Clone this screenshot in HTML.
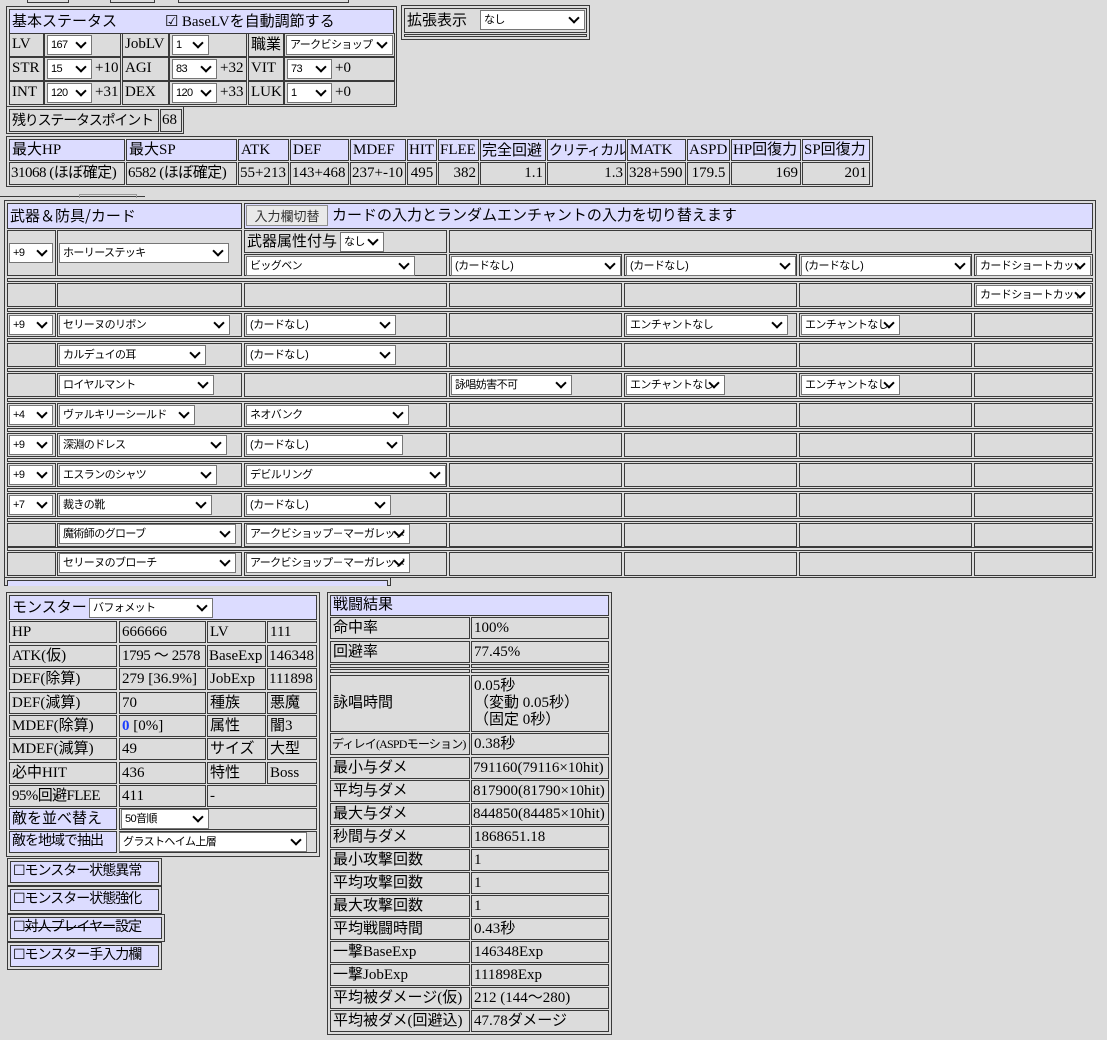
<!DOCTYPE html>
<html><head><meta charset="utf-8">
<style>
body{margin:0;width:1107px;height:1040px;background:#dcdcdc;font:15px "Liberation Serif","Noto Sans CJK JP",serif;color:#000;position:relative;overflow:hidden}
.b{position:absolute;border:1px solid #3a3a3a;box-sizing:border-box}
.c{position:absolute;border:1px solid #3a3a3a;box-sizing:border-box;padding-left:2px;white-space:nowrap;overflow:hidden;line-height:20px}
.h{background:#dcdcff}
.r{text-align:right;padding-right:2px}
.s{position:absolute;height:20px;box-sizing:border-box;background:#fff;border:1px solid #767676;font:11px "Liberation Sans","Noto Sans CJK JP",sans-serif;letter-spacing:-0.6px;line-height:18px;padding-left:3px;padding-right:18px;white-space:nowrap;overflow:hidden}
.s::after{content:"";position:absolute;right:6px;top:3px;width:6px;height:6px;border-right:2px solid #000;border-bottom:2px solid #000;transform:rotate(45deg);background:#fff}
.t{position:absolute;white-space:nowrap;line-height:20px}
.jp{font-family:"Noto Sans CJK JP","Liberation Sans",sans-serif}
.k{letter-spacing:-1px;font-size:14px}
.k2{letter-spacing:-1.2px;font-size:14px}
</style></head><body>

<div class="b" style="left:27px;top:-10px;width:42px;height:13px"></div>
<div class="b" style="left:110px;top:-10px;width:45px;height:13px"></div>
<div class="b" style="left:178px;top:-10px;width:171px;height:13px"></div>

<div class="b" style="left:6px;top:6px;width:391px;height:101px"></div>
<div class="c h jp" style="left:9px;top:9px;width:385px;height:25px;line-height:22px">基本ステータス<span style="position:absolute;left:155px">☑ <span style="font-family:'Liberation Serif','Noto Sans CJK JP',serif">BaseLV</span>を自動調節する</span></div>

<div class="c" style="left:9px;top:33px;width:35px;height:24px">LV</div>
<div class="c" style="left:44px;top:33px;width:77px;height:24px"></div><div class="s" style="left:47px;top:35px;width:45px">167</div>
<div class="c" style="left:122px;top:33px;width:47px;height:24px">JobLV</div>
<div class="c" style="left:169px;top:33px;width:78px;height:24px"></div><div class="s" style="left:172px;top:35px;width:37px">1</div>
<div class="c jp" style="left:248px;top:33px;width:36px;height:24px">職業</div>
<div class="c" style="left:284px;top:33px;width:111px;height:24px"></div><div class="s" style="left:286px;top:35px;width:107px">アークビショップ</div>

<div class="c" style="left:9px;top:57px;width:35px;height:24px">STR</div>
<div class="c" style="left:44px;top:57px;width:77px;height:24px"></div><div class="s" style="left:47px;top:59px;width:45px">15</div><div class="t" style="left:95px;top:58px">+10</div>
<div class="c" style="left:122px;top:57px;width:47px;height:24px">AGI</div>
<div class="c" style="left:169px;top:57px;width:78px;height:24px"></div><div class="s" style="left:172px;top:59px;width:45px">83</div><div class="t" style="left:220px;top:58px">+32</div>
<div class="c" style="left:248px;top:57px;width:36px;height:24px">VIT</div>
<div class="c" style="left:284px;top:57px;width:111px;height:24px"></div><div class="s" style="left:287px;top:59px;width:45px">73</div><div class="t" style="left:335px;top:58px">+0</div>

<div class="c" style="left:9px;top:81px;width:35px;height:24px">INT</div>
<div class="c" style="left:44px;top:81px;width:77px;height:24px"></div><div class="s" style="left:47px;top:83px;width:45px">120</div><div class="t" style="left:95px;top:82px">+31</div>
<div class="c" style="left:122px;top:81px;width:47px;height:24px">DEX</div>
<div class="c" style="left:169px;top:81px;width:78px;height:24px"></div><div class="s" style="left:172px;top:83px;width:45px">120</div><div class="t" style="left:220px;top:82px">+33</div>
<div class="c" style="left:248px;top:81px;width:36px;height:24px">LUK</div>
<div class="c" style="left:284px;top:81px;width:111px;height:24px"></div><div class="s" style="left:287px;top:83px;width:45px">1</div><div class="t" style="left:335px;top:82px">+0</div>

<div class="b" style="left:6px;top:106px;width:178px;height:28px"></div>
<div class="c jp k2" style="left:9px;top:109px;width:150px;height:23px">残りステータスポイント</div>
<div class="c" style="left:160px;top:109px;width:22px;height:23px;padding-left:1px">68</div>

<div class="b" style="left:401px;top:5px;width:189px;height:35px"></div>
<div class="c jp" style="left:404px;top:8px;width:183px;height:25px;line-height:22px">拡張表示</div>
<div class="s" style="left:480px;top:10px;width:105px">なし</div>
<div class="b" style="left:404px;top:34px;width:183px;height:3px"></div>

<div class="b" style="left:6px;top:136px;width:867px;height:51px"></div>
<div class="c h" style="left:9px;top:139px;width:116px;height:22px">最大HP</div>
<div class="c h" style="left:126px;top:139px;width:111px;height:22px">最大SP</div>
<div class="c h" style="left:238px;top:139px;width:51px;height:22px">ATK</div>
<div class="c h" style="left:290px;top:139px;width:59px;height:22px">DEF</div>
<div class="c h" style="left:350px;top:139px;width:56px;height:22px">MDEF</div>
<div class="c h" style="left:407px;top:139px;width:30px;height:22px;padding-left:1px">HIT</div>
<div class="c h" style="left:438px;top:139px;width:41px;height:22px;padding-left:1px">FLEE</div>
<div class="c h jp" style="left:480px;top:139px;width:66px;height:22px;padding-left:1px">完全回避</div>
<div class="c h jp k" style="left:547px;top:139px;width:79px;height:22px;padding-left:1px">クリティカル</div>
<div class="c h" style="left:627px;top:139px;width:59px;height:22px">MATK</div>
<div class="c h" style="left:687px;top:139px;width:43px;height:22px;padding-left:1px">ASPD</div>
<div class="c h" style="left:731px;top:139px;width:70px;height:22px;padding-left:1px">HP回復力</div>
<div class="c h" style="left:802px;top:139px;width:68px;height:22px;padding-left:1px">SP回復力</div>

<div class="c" style="left:9px;top:162px;width:116px;height:23px;padding-left:1px;letter-spacing:-0.5px">31068 (ほぼ確定)</div>
<div class="c" style="left:126px;top:162px;width:111px;height:23px;padding-left:1px;letter-spacing:-0.5px">6582 (ほぼ確定)</div>
<div class="c" style="left:238px;top:162px;width:51px;height:23px;padding-left:1px">55+213</div>
<div class="c" style="left:290px;top:162px;width:59px;height:23px;padding-left:1px">143+468</div>
<div class="c" style="left:350px;top:162px;width:56px;height:23px;padding-left:1px">237+-10</div>
<div class="c" style="left:407px;top:162px;width:30px;height:23px;text-align:center;padding:0">495</div>
<div class="c r" style="left:438px;top:162px;width:41px;height:23px">382</div>
<div class="c r" style="left:480px;top:162px;width:66px;height:23px">1.1</div>
<div class="c r" style="left:547px;top:162px;width:79px;height:23px">1.3</div>
<div class="c" style="left:627px;top:162px;width:59px;height:23px;padding-left:1px">328+590</div>
<div class="c" style="left:687px;top:162px;width:43px;height:23px;text-align:center;padding:0">179.5</div>
<div class="c r" style="left:731px;top:162px;width:70px;height:23px">169</div>
<div class="c r" style="left:802px;top:162px;width:68px;height:23px">201</div>

<div class="b" style="left:0px;top:196px;width:145px;height:2px;border-width:1px 0 0 0"></div>
<div class="b" style="left:79px;top:194px;width:58px;height:4px;border-width:1px 1px 0 1px;border-color:#999"></div>

<div class="b" style="left:4px;top:200px;width:1092px;height:378px"></div>
<div class="c h jp" style="left:7px;top:203px;width:235px;height:26px;line-height:23px">武器＆防具/カード</div>
<div class="c h jp" style="left:244px;top:203px;width:849px;height:26px;line-height:23px"></div>
<div style="position:absolute;left:246px;top:205px;width:82px;height:21px;box-sizing:border-box;border:1px solid #8f8f8f;background:#e9e9e9;font:13px 'Noto Sans CJK JP',sans-serif;line-height:19px;text-align:center;color:#333">入力欄切替</div>
<div class="t jp" style="left:332px;top:205px">カードの入力とランダムエンチャントの入力を切り替えます</div>

<div class="c" style="left:7px;top:230px;width:49px;height:46px"></div><div class="s" style="left:9px;top:243px;width:44px">+9</div>
<div class="c" style="left:57px;top:230px;width:185px;height:46px"></div><div class="s" style="left:59px;top:243px;width:170px">ホーリーステッキ</div>
<div class="c jp" style="left:244px;top:230px;width:203px;height:23px">武器属性付与</div><div class="s" style="left:340px;top:232px;width:44px">なし</div>
<div class="c" style="left:449px;top:230px;width:643px;height:23px"></div>
<div class="c" style="left:244px;top:254px;width:203px;height:22px"></div><div class="s" style="left:246px;top:256px;width:169px">ビッグベン</div>
<div class="c" style="left:449px;top:254px;width:173px;height:22px"></div><div class="s" style="left:451px;top:256px;width:170px">(カードなし)</div>
<div class="c" style="left:624px;top:254px;width:173px;height:22px"></div><div class="s" style="left:626px;top:256px;width:170px">(カードなし)</div>
<div class="c" style="left:799px;top:254px;width:173px;height:22px"></div><div class="s" style="left:801px;top:256px;width:170px">(カードなし)</div>
<div class="c" style="left:974px;top:254px;width:119px;height:22px"></div><div class="s" style="left:976px;top:256px;width:115px">カードショートカット</div>

<div class="b" style="left:7px;top:278px;width:1086px;height:4px"></div>
<div class="b" style="left:7px;top:308px;width:1086px;height:4px"></div>
<div class="b" style="left:7px;top:338px;width:1086px;height:4px"></div>
<div class="b" style="left:7px;top:368px;width:1086px;height:4px"></div>
<div class="b" style="left:7px;top:398px;width:1086px;height:4px"></div>
<div class="b" style="left:7px;top:428px;width:1086px;height:4px"></div>
<div class="b" style="left:7px;top:458px;width:1086px;height:4px"></div>
<div class="b" style="left:7px;top:488px;width:1086px;height:4px"></div>
<div class="b" style="left:7px;top:518px;width:1086px;height:4px"></div>
<div class="b" style="left:7px;top:547px;width:1086px;height:4px"></div>

<div class="c" style="left:7px;top:283px;width:49px;height:24px"></div><div class="c" style="left:57px;top:283px;width:185px;height:24px"></div><div class="c" style="left:244px;top:283px;width:203px;height:24px"></div><div class="c" style="left:449px;top:283px;width:173px;height:24px"></div><div class="c" style="left:624px;top:283px;width:173px;height:24px"></div><div class="c" style="left:799px;top:283px;width:173px;height:24px"></div><div class="c" style="left:974px;top:283px;width:119px;height:24px"></div>
<div class="s" style="left:976px;top:285px;width:115px">カードショートカット</div>

<div class="c" style="left:7px;top:313px;width:49px;height:24px"></div><div class="c" style="left:57px;top:313px;width:185px;height:24px"></div><div class="c" style="left:244px;top:313px;width:203px;height:24px"></div><div class="c" style="left:449px;top:313px;width:173px;height:24px"></div><div class="c" style="left:624px;top:313px;width:173px;height:24px"></div><div class="c" style="left:799px;top:313px;width:173px;height:24px"></div><div class="c" style="left:974px;top:313px;width:119px;height:24px"></div>
<div class="s" style="left:9px;top:315px;width:44px">+9</div><div class="s" style="left:59px;top:315px;width:171px">セリーヌのリボン</div><div class="s" style="left:246px;top:315px;width:150px">(カードなし)</div><div class="s" style="left:626px;top:315px;width:162px">エンチャントなし</div><div class="s" style="left:801px;top:315px;width:99px">エンチャントなし</div>

<div class="c" style="left:7px;top:343px;width:49px;height:24px"></div><div class="c" style="left:57px;top:343px;width:185px;height:24px"></div><div class="c" style="left:244px;top:343px;width:203px;height:24px"></div><div class="c" style="left:449px;top:343px;width:173px;height:24px"></div><div class="c" style="left:624px;top:343px;width:173px;height:24px"></div><div class="c" style="left:799px;top:343px;width:173px;height:24px"></div><div class="c" style="left:974px;top:343px;width:119px;height:24px"></div>
<div class="s" style="left:59px;top:345px;width:147px">カルデュイの耳</div><div class="s" style="left:246px;top:345px;width:150px">(カードなし)</div>

<div class="c" style="left:7px;top:373px;width:49px;height:24px"></div><div class="c" style="left:57px;top:373px;width:185px;height:24px"></div><div class="c" style="left:244px;top:373px;width:203px;height:24px"></div><div class="c" style="left:449px;top:373px;width:173px;height:24px"></div><div class="c" style="left:624px;top:373px;width:173px;height:24px"></div><div class="c" style="left:799px;top:373px;width:173px;height:24px"></div><div class="c" style="left:974px;top:373px;width:119px;height:24px"></div>
<div class="s" style="left:59px;top:375px;width:155px">ロイヤルマント</div><div class="s" style="left:451px;top:375px;width:121px">詠唱妨害不可</div><div class="s" style="left:626px;top:375px;width:99px">エンチャントなし</div><div class="s" style="left:801px;top:375px;width:99px">エンチャントなし</div>

<div class="c" style="left:7px;top:403px;width:49px;height:24px"></div><div class="c" style="left:57px;top:403px;width:185px;height:24px"></div><div class="c" style="left:244px;top:403px;width:203px;height:24px"></div><div class="c" style="left:449px;top:403px;width:173px;height:24px"></div><div class="c" style="left:624px;top:403px;width:173px;height:24px"></div><div class="c" style="left:799px;top:403px;width:173px;height:24px"></div><div class="c" style="left:974px;top:403px;width:119px;height:24px"></div>
<div class="s" style="left:9px;top:405px;width:44px">+4</div><div class="s" style="left:59px;top:405px;width:136px">ヴァルキリーシールド</div><div class="s" style="left:246px;top:405px;width:163px">ネオバンク</div>

<div class="c" style="left:7px;top:433px;width:49px;height:24px"></div><div class="c" style="left:57px;top:433px;width:185px;height:24px"></div><div class="c" style="left:244px;top:433px;width:203px;height:24px"></div><div class="c" style="left:449px;top:433px;width:173px;height:24px"></div><div class="c" style="left:624px;top:433px;width:173px;height:24px"></div><div class="c" style="left:799px;top:433px;width:173px;height:24px"></div><div class="c" style="left:974px;top:433px;width:119px;height:24px"></div>
<div class="s" style="left:9px;top:435px;width:44px">+9</div><div class="s" style="left:59px;top:435px;width:168px">深淵のドレス</div><div class="s" style="left:246px;top:435px;width:157px">(カードなし)</div>

<div class="c" style="left:7px;top:463px;width:49px;height:24px"></div><div class="c" style="left:57px;top:463px;width:185px;height:24px"></div><div class="c" style="left:244px;top:463px;width:203px;height:24px"></div><div class="c" style="left:449px;top:463px;width:173px;height:24px"></div><div class="c" style="left:624px;top:463px;width:173px;height:24px"></div><div class="c" style="left:799px;top:463px;width:173px;height:24px"></div><div class="c" style="left:974px;top:463px;width:119px;height:24px"></div>
<div class="s" style="left:9px;top:465px;width:44px">+9</div><div class="s" style="left:59px;top:465px;width:158px">エスランのシャツ</div><div class="s" style="left:246px;top:465px;width:200px">デビルリング</div>

<div class="c" style="left:7px;top:493px;width:49px;height:24px"></div><div class="c" style="left:57px;top:493px;width:185px;height:24px"></div><div class="c" style="left:244px;top:493px;width:203px;height:24px"></div><div class="c" style="left:449px;top:493px;width:173px;height:24px"></div><div class="c" style="left:624px;top:493px;width:173px;height:24px"></div><div class="c" style="left:799px;top:493px;width:173px;height:24px"></div><div class="c" style="left:974px;top:493px;width:119px;height:24px"></div>
<div class="s" style="left:9px;top:495px;width:44px">+7</div><div class="s" style="left:59px;top:495px;width:153px">裁きの靴</div><div class="s" style="left:246px;top:495px;width:145px">(カードなし)</div>

<div class="c" style="left:7px;top:523px;width:49px;height:24px"></div><div class="c" style="left:57px;top:523px;width:185px;height:24px"></div><div class="c" style="left:244px;top:523px;width:203px;height:24px"></div><div class="c" style="left:449px;top:523px;width:173px;height:24px"></div><div class="c" style="left:624px;top:523px;width:173px;height:24px"></div><div class="c" style="left:799px;top:523px;width:173px;height:24px"></div><div class="c" style="left:974px;top:523px;width:119px;height:24px"></div>
<div class="s" style="left:59px;top:524px;width:177px">魔術師のグローブ</div><div class="s" style="left:246px;top:524px;width:164px">アークビショップ－マーガレッタ</div>

<div class="c" style="left:7px;top:552px;width:49px;height:24px"></div><div class="c" style="left:57px;top:552px;width:185px;height:24px"></div><div class="c" style="left:244px;top:552px;width:203px;height:24px"></div><div class="c" style="left:449px;top:552px;width:173px;height:24px"></div><div class="c" style="left:624px;top:552px;width:173px;height:24px"></div><div class="c" style="left:799px;top:552px;width:173px;height:24px"></div><div class="c" style="left:974px;top:552px;width:119px;height:24px"></div>
<div class="s" style="left:59px;top:553px;width:177px">セリーヌのブローチ</div><div class="s" style="left:246px;top:553px;width:164px">アークビショップ－マーガレッタ</div>

<div class="b" style="left:4px;top:577px;width:387px;height:9px"></div>
<div class="b h" style="left:7px;top:580px;width:381px;height:6px;border-bottom:0"></div>

<div class="b" style="left:6px;top:592px;width:314px;height:265px"></div>
<div class="c h jp" style="left:9px;top:595px;width:308px;height:25px;line-height:22px">モンスター：</div>
<div class="s" style="left:89px;top:598px;width:124px">バフォメット</div>

<div class="c" style="left:9px;top:621px;width:108px;height:22px">HP</div><div class="c" style="left:119px;top:621px;width:87px;height:22px">666666</div><div class="c" style="left:207px;top:621px;width:59px;height:22px">LV</div><div class="c" style="left:267px;top:621px;width:50px;height:22px">111</div>
<div class="c" style="left:9px;top:645px;width:108px;height:22px">ATK(仮)</div><div class="c" style="left:119px;top:645px;width:87px;height:22px;letter-spacing:-0.4px">1795 ～ 2578</div><div class="c" style="left:207px;top:645px;width:59px;height:22px;padding-left:1px">BaseExp</div><div class="c" style="left:267px;top:645px;width:50px;height:22px;padding-left:1px">146348</div>
<div class="c" style="left:9px;top:668px;width:108px;height:22px">DEF(除算)</div><div class="c" style="left:119px;top:668px;width:87px;height:22px">279 [36.9%]</div><div class="c" style="left:207px;top:668px;width:59px;height:22px">JobExp</div><div class="c" style="left:267px;top:668px;width:50px;height:22px;padding-left:1px">111898</div>
<div class="c" style="left:9px;top:692px;width:108px;height:22px">DEF(減算)</div><div class="c" style="left:119px;top:692px;width:87px;height:22px">70</div><div class="c" style="left:207px;top:692px;width:59px;height:22px">種族</div><div class="c" style="left:267px;top:692px;width:50px;height:22px">悪魔</div>
<div class="c" style="left:9px;top:715px;width:108px;height:22px">MDEF(除算)</div><div class="c" style="left:119px;top:715px;width:87px;height:22px"><b style="color:#1a3cff">0</b> [0%]</div><div class="c" style="left:207px;top:715px;width:59px;height:22px">属性</div><div class="c" style="left:267px;top:715px;width:50px;height:22px">闇3</div>
<div class="c" style="left:9px;top:738px;width:108px;height:22px">MDEF(減算)</div><div class="c" style="left:119px;top:738px;width:87px;height:22px">49</div><div class="c" style="left:207px;top:738px;width:59px;height:22px">サイズ</div><div class="c" style="left:267px;top:738px;width:50px;height:22px">大型</div>
<div class="c" style="left:9px;top:762px;width:108px;height:22px">必中HIT</div><div class="c" style="left:119px;top:762px;width:87px;height:22px">436</div><div class="c" style="left:207px;top:762px;width:59px;height:22px">特性</div><div class="c" style="left:267px;top:762px;width:50px;height:22px">Boss</div>
<div class="c" style="left:9px;top:785px;width:108px;height:22px;letter-spacing:-0.6px">95%回避FLEE</div><div class="c" style="left:119px;top:785px;width:87px;height:22px">411</div><div class="c" style="left:207px;top:785px;width:110px;height:22px">-</div>
<div class="c h" style="left:9px;top:808px;width:108px;height:22px">敵を並べ替え</div><div class="c" style="left:119px;top:808px;width:198px;height:22px"></div><div class="s" style="left:121px;top:809px;width:88px">50音順</div>
<div class="c h k" style="left:9px;top:831px;width:108px;height:22px">敵を地域で抽出</div><div class="c" style="left:119px;top:831px;width:198px;height:22px"></div><div class="s" style="left:119px;top:832px;width:188px">グラストヘイム上層</div>

<div class="b" style="left:7px;top:858px;width:155px;height:28px"></div><div class="c h k" style="left:10px;top:861px;width:149px;height:22px">☐モンスター状態異常</div>
<div class="b" style="left:7px;top:886px;width:155px;height:28px"></div><div class="c h k" style="left:10px;top:889px;width:149px;height:22px">☐モンスター状態強化</div>
<div class="b" style="left:7px;top:914px;width:158px;height:28px"></div><div class="c h k" style="left:10px;top:917px;width:152px;height:22px">☐<s>対人プレイヤー</s>設定</div>
<div class="b" style="left:7px;top:942px;width:155px;height:28px"></div><div class="c h k" style="left:10px;top:945px;width:149px;height:22px">☐モンスター手入力欄</div>

<div class="b" style="left:327px;top:592px;width:285px;height:443px"></div>
<div class="c h" style="left:330px;top:595px;width:279px;height:21px;line-height:19px">戦闘結果</div>
<div class="c" style="left:330px;top:617px;width:140px;height:22px">命中率</div><div class="c" style="left:471px;top:617px;width:138px;height:22px">100%</div>
<div class="c" style="left:330px;top:641px;width:140px;height:22px">回避率</div><div class="c" style="left:471px;top:641px;width:138px;height:22px">77.45%</div>
<div class="b" style="left:330px;top:664px;width:140px;height:4px"></div><div class="b" style="left:471px;top:664px;width:138px;height:4px"></div>
<div class="b" style="left:330px;top:669px;width:140px;height:4px"></div><div class="b" style="left:471px;top:669px;width:138px;height:4px"></div>
<div class="c" style="left:330px;top:675px;width:140px;height:57px;line-height:55px">詠唱時間</div><div class="c" style="left:471px;top:675px;width:138px;height:57px;line-height:17px;padding-top:2px">0.05秒<br>（変動 0.05秒）<br>（固定 0秒）</div>
<div class="c" style="left:330px;top:733px;width:140px;height:22px;font-size:12px;letter-spacing:-0.8px;padding-left:1px">ディレイ(ASPDモーション)</div><div class="c" style="left:471px;top:733px;width:138px;height:22px">0.38秒</div>
<div class="c" style="left:330px;top:757px;width:140px;height:22px">最小与ダメ</div><div class="c" style="left:471px;top:757px;width:138px;height:22px;padding-left:1px">791160(79116×10hit)</div>
<div class="c" style="left:330px;top:780px;width:140px;height:22px">平均与ダメ</div><div class="c" style="left:471px;top:780px;width:138px;height:22px;padding-left:1px">817900(81790×10hit)</div>
<div class="c" style="left:330px;top:803px;width:140px;height:22px">最大与ダメ</div><div class="c" style="left:471px;top:803px;width:138px;height:22px;padding-left:1px">844850(84485×10hit)</div>
<div class="c" style="left:330px;top:826px;width:140px;height:22px">秒間与ダメ</div><div class="c" style="left:471px;top:826px;width:138px;height:22px">1868651.18</div>
<div class="c" style="left:330px;top:849px;width:140px;height:22px">最小攻撃回数</div><div class="c" style="left:471px;top:849px;width:138px;height:22px">1</div>
<div class="c" style="left:330px;top:872px;width:140px;height:22px">平均攻撃回数</div><div class="c" style="left:471px;top:872px;width:138px;height:22px">1</div>
<div class="c" style="left:330px;top:895px;width:140px;height:22px">最大攻撃回数</div><div class="c" style="left:471px;top:895px;width:138px;height:22px">1</div>
<div class="c" style="left:330px;top:918px;width:140px;height:22px">平均戦闘時間</div><div class="c" style="left:471px;top:918px;width:138px;height:22px">0.43秒</div>
<div class="c" style="left:330px;top:941px;width:140px;height:22px">一撃BaseExp</div><div class="c" style="left:471px;top:941px;width:138px;height:22px">146348Exp</div>
<div class="c" style="left:330px;top:964px;width:140px;height:22px">一撃JobExp</div><div class="c" style="left:471px;top:964px;width:138px;height:22px">111898Exp</div>
<div class="c" style="left:330px;top:987px;width:140px;height:22px">平均被ダメージ(仮)</div><div class="c" style="left:471px;top:987px;width:138px;height:22px">212 (144～280)</div>
<div class="c" style="left:330px;top:1010px;width:140px;height:22px">平均被ダメ(回避込)</div><div class="c" style="left:471px;top:1010px;width:138px;height:22px">47.78ダメージ</div>

</body></html>
